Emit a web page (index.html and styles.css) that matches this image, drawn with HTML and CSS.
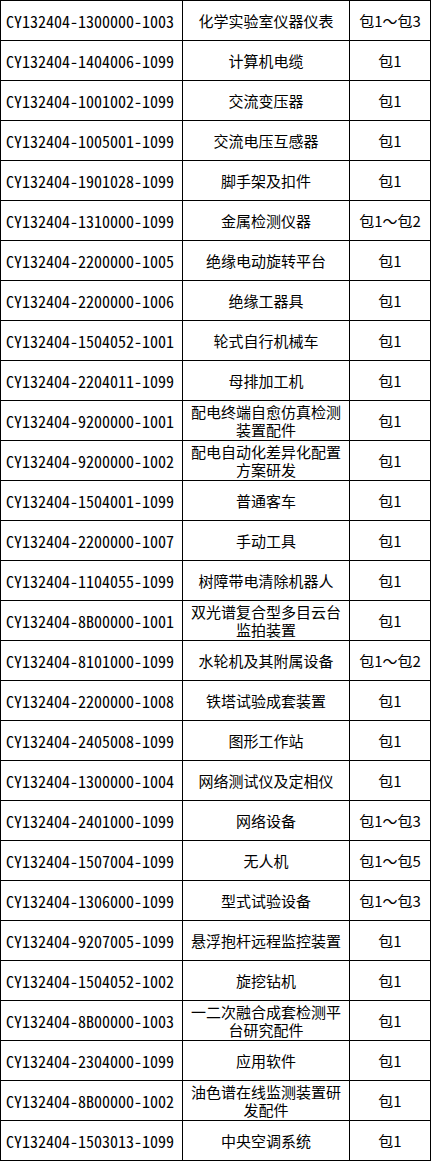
FILE: index.html
```html
<!DOCTYPE html>
<html lang="zh-CN">
<head>
<meta charset="utf-8">
<title>物资清单</title>
<link rel="stylesheet" href="styles.css">
</head>
<body>
<div class="sheet">
  <div class="cell code">CY132404-1300000-1003</div><div class="cell name">化学实验室仪器仪表</div><div class="cell pkg">包1～包3</div>
  <div class="cell code">CY132404-1404006-1099</div><div class="cell name">计算机电缆</div><div class="cell pkg">包1</div>
  <div class="cell code">CY132404-1001002-1099</div><div class="cell name">交流变压器</div><div class="cell pkg">包1</div>
  <div class="cell code">CY132404-1005001-1099</div><div class="cell name">交流电压互感器</div><div class="cell pkg">包1</div>
  <div class="cell code">CY132404-1901028-1099</div><div class="cell name">脚手架及扣件</div><div class="cell pkg">包1</div>
  <div class="cell code">CY132404-1310000-1099</div><div class="cell name">金属检测仪器</div><div class="cell pkg">包1～包2</div>
  <div class="cell code">CY132404-2200000-1005</div><div class="cell name">绝缘电动旋转平台</div><div class="cell pkg">包1</div>
  <div class="cell code">CY132404-2200000-1006</div><div class="cell name">绝缘工器具</div><div class="cell pkg">包1</div>
  <div class="cell code">CY132404-1504052-1001</div><div class="cell name">轮式自行机械车</div><div class="cell pkg">包1</div>
  <div class="cell code">CY132404-2204011-1099</div><div class="cell name">母排加工机</div><div class="cell pkg">包1</div>
  <div class="cell code">CY132404-9200000-1001</div><div class="cell name">配电终端自愈仿真检测装置配件</div><div class="cell pkg">包1</div>
  <div class="cell code">CY132404-9200000-1002</div><div class="cell name">配电自动化差异化配置方案研发</div><div class="cell pkg">包1</div>
  <div class="cell code">CY132404-1504001-1099</div><div class="cell name">普通客车</div><div class="cell pkg">包1</div>
  <div class="cell code">CY132404-2200000-1007</div><div class="cell name">手动工具</div><div class="cell pkg">包1</div>
  <div class="cell code">CY132404-1104055-1099</div><div class="cell name">树障带电清除机器人</div><div class="cell pkg">包1</div>
  <div class="cell code">CY132404-8B00000-1001</div><div class="cell name">双光谱复合型多目云台监拍装置</div><div class="cell pkg">包1</div>
  <div class="cell code">CY132404-8101000-1099</div><div class="cell name">水轮机及其附属设备</div><div class="cell pkg">包1～包2</div>
  <div class="cell code">CY132404-2200000-1008</div><div class="cell name">铁塔试验成套装置</div><div class="cell pkg">包1</div>
  <div class="cell code">CY132404-2405008-1099</div><div class="cell name">图形工作站</div><div class="cell pkg">包1</div>
  <div class="cell code">CY132404-1300000-1004</div><div class="cell name">网络测试仪及定相仪</div><div class="cell pkg">包1</div>
  <div class="cell code">CY132404-2401000-1099</div><div class="cell name">网络设备</div><div class="cell pkg">包1～包3</div>
  <div class="cell code">CY132404-1507004-1099</div><div class="cell name">无人机</div><div class="cell pkg">包1～包5</div>
  <div class="cell code">CY132404-1306000-1099</div><div class="cell name">型式试验设备</div><div class="cell pkg">包1～包3</div>
  <div class="cell code">CY132404-9207005-1099</div><div class="cell name">悬浮抱杆远程监控装置</div><div class="cell pkg">包1</div>
  <div class="cell code">CY132404-1504052-1002</div><div class="cell name">旋挖钻机</div><div class="cell pkg">包1</div>
  <div class="cell code">CY132404-8B00000-1003</div><div class="cell name">一二次融合成套检测平台研究配件</div><div class="cell pkg">包1</div>
  <div class="cell code">CY132404-2304000-1099</div><div class="cell name">应用软件</div><div class="cell pkg">包1</div>
  <div class="cell code">CY132404-8B00000-1002</div><div class="cell name">油色谱在线监测装置研发配件</div><div class="cell pkg">包1</div>
  <div class="cell code">CY132404-1503013-1099</div><div class="cell name">中央空调系统</div><div class="cell pkg">包1</div>
</div>
</body>
</html>
```

FILE: styles.css
```css
html, body {
  margin: 0;
  padding: 0;
  background: #ffffff;
}

.sheet {
  display: grid;
  grid-template-columns: 182px 167px 81px;
  grid-auto-rows: 40px;
  width: 431px;
  box-sizing: border-box;
  border-top: 1px solid #000;
  border-left: 1px solid #000;
  color: #000;
  font-family: "Noto Sans CJK SC", sans-serif;
  font-size: 15px;
  line-height: 18px;
}

.cell {
  box-sizing: border-box;
  border-right: 1px solid #000;
  border-bottom: 1px solid #000;
  display: flex;
  align-items: center;
  justify-content: center;
  text-align: center;
  padding: 0 6px;
}

.code {
  justify-content: flex-start;
  padding-left: 5px;
  font-family: "Noto Sans Mono CJK SC", "DejaVu Sans Mono", monospace;
  font-size: 16px;
  white-space: nowrap;
}

.pkg {
  padding: 0 2px;
  white-space: nowrap;
}
```
